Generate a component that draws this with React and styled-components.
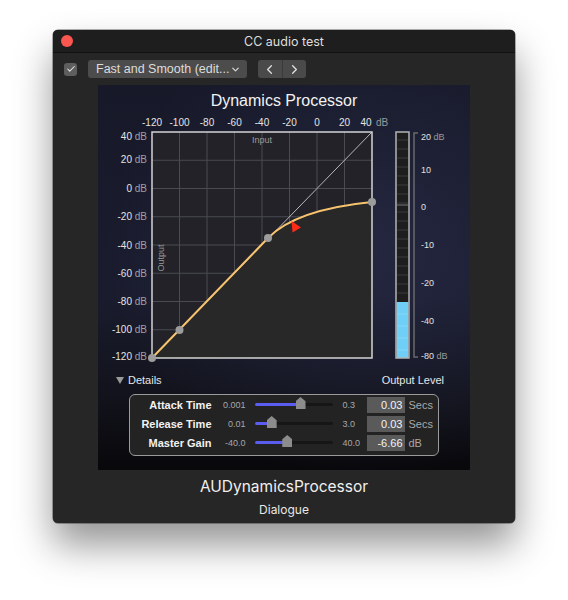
import styled, { createGlobalStyle } from "styled-components";
import { Check, ChevronDown, ChevronLeft, ChevronRight } from "lucide-react";

const GlobalStyle = createGlobalStyle`
  html, body {
    margin: 0;
    padding: 0;
    background: #ffffff;
  }
  body {
    font-family: "Liberation Sans", Arial, sans-serif;
  }
`;

const params = [
  { label: "Attack Time", min: "0.001", max: "0.3", value: "0.03", unit: "Secs", pos: 0.59 },
  { label: "Release Time", min: "0.01", max: "3.0", value: "0.03", unit: "Secs", pos: 0.22 },
  { label: "Master Gain", min: "-40.0", max: "40.0", value: "-6.66", unit: "dB", pos: 0.42 },
];

const xTicks = [
  ["-120", 152],
  ["-100", 179.5],
  ["-80", 207],
  ["-60", 234.5],
  ["-40", 262],
  ["-20", 289.5],
  ["0", 317],
  ["20", 344.5],
  ["40", 366],
];

const yTicks = [
  ["40", 136],
  ["20", 159.5],
  ["0", 188],
  ["-20", 216],
  ["-40", 245],
  ["-60", 273],
  ["-80", 301],
  ["-100", 329.5],
  ["-120", 356],
];

const meterTicks = [
  ["20", 136, true],
  ["10", 169],
  ["0", 206],
  ["-10", 244],
  ["-20", 282],
  ["-40", 320],
  ["-80", 355, true],
];

const Chart = () => {
  const vLines = [1, 2, 3, 4, 5, 6, 7].map((i) => 152 + i * 27.5);
  const hLines = [1, 2, 3, 4, 5, 6, 7].map((i) => 132 + i * 28.25);
  const curve = "M152 358 L268 238 Q295.6 209.6 372 202";
  const segs = [];
  for (let y = 140; y < 300; y += 9) segs.push(y);
  return (
    <ChartSvg width="372" height="258" viewBox="0 0 372 258">
      <g transform="translate(-98,-112)" fontFamily="Liberation Sans, Arial, sans-serif">
        {xTicks.map(([t, x]) => (
          <text key={t} x={x} y="126" fontSize="10" fill="#e4e4e4" textAnchor="middle">
            {t}
          </text>
        ))}
        <text x="376" y="126" fontSize="10" fill="#9a9a9a">dB</text>
        {yTicks.map(([t, y]) => (
          <text key={t} x="147" y={y + 3.5} fontSize="10" fill="#e4e4e4" textAnchor="end">
            {t} <tspan fill="#a0a0a0">dB</tspan>
          </text>
        ))}

        <rect x="152" y="132" width="220" height="226" fill="#222228" />
        {vLines.map((x) => (
          <line key={x} x1={x} y1="132" x2={x} y2="358" stroke="#4a4a52" strokeWidth="1" />
        ))}
        {hLines.map((y) => (
          <line key={y} x1="152" y1={y} x2="372" y2={y} stroke="#4a4a52" strokeWidth="1" />
        ))}
        <path d={curve + " L372 358 Z"} fill="#282828" />
        <text x="262" y="143" fontSize="9" fill="#9a9a9a" textAnchor="middle">Input</text>
        <text
          x="0"
          y="0"
          fontSize="9"
          fill="#9a9a9a"
          textAnchor="middle"
          transform="translate(164,258) rotate(-90)"
        >
          Output
        </text>
        <line x1="152" y1="358" x2="372" y2="132" stroke="#b8b8b8" strokeWidth="1" />
        <path d={curve} fill="none" stroke="#f7c36e" strokeWidth="2" />
        <rect x="152" y="132" width="220" height="226" fill="none" stroke="#d4d4d4" strokeWidth="1.5" />
        {[
          [152, 358],
          [179.5, 330],
          [268, 238],
          [372, 202],
        ].map(([cx, cy]) => (
          <circle key={cx} cx={cx} cy={cy} r="4" fill="#9c9c9c" />
        ))}
        <polygon points="291.5,221 301,227.5 292.5,232.5" fill="#ff2b17" />

        <rect x="396" y="132" width="13" height="226" fill="#1e1e1e" />
        {segs.map((y) => (
          <line key={y} x1="397" y1={y} x2="408" y2={y} stroke="#3a3a3a" strokeWidth="1" />
        ))}
        <line x1="397" y1="205" x2="408" y2="205" stroke="#777" strokeWidth="1" />
        <rect x="396.5" y="302" width="12" height="56" fill="#6fcff6" />
        {[314, 326, 338, 350].map((y) => (
          <line key={y} x1="397" y1={y} x2="408" y2={y} stroke="#86d8f8" strokeWidth="1" />
        ))}
        <rect x="396" y="132" width="13" height="226" fill="none" stroke="#b4b4b4" strokeWidth="1.5" />

        <path d="M418 133 L414 133 L414 357 L418 357" fill="none" stroke="#6a6a6a" strokeWidth="1.5" />
        {meterTicks.map(([t, y, unit]) => (
          <text key={t} x="421" y={y + 3.5} fontSize="9" fill="#e0e0e0">
            {t}
            {unit && <tspan fill="#9a9a9a"> dB</tspan>}
          </text>
        ))}
      </g>
    </ChartSvg>
  );
};

const App = () => (
  <>
    <GlobalStyle />
    <Page>
      <Window>
        <TitleBar>
          <CloseDot />
          <TitleText>CC audio test</TitleText>
        </TitleBar>
        <Toolbar>
          <CheckBox>
            <Check size={10} strokeWidth={2.5} color="#e8e8e8" />
          </CheckBox>
          <PopupButton>
            <span>Fast and Smooth (edit...</span>
            <ChevronDown size={11} strokeWidth={2.5} color="#dcdcdc" />
          </PopupButton>
          <Segmented>
            <Segment>
              <ChevronLeft size={15} strokeWidth={2} color="#e0e0e0" />
            </Segment>
            <Segment $divider>
              <ChevronRight size={15} strokeWidth={2} color="#e0e0e0" />
            </Segment>
          </Segmented>
        </Toolbar>

        <PluginPanel>
          <PanelTitle>Dynamics Processor</PanelTitle>
          <Chart />
          <DetailsRow>
            <Disclosure>
              <Triangle />
              Details
            </Disclosure>
            <OutputLabel>Output Level</OutputLabel>
          </DetailsRow>
          <ParamBox>
            {params.map((p) => (
              <ParamRow key={p.label}>
                <ParamLabel>{p.label}</ParamLabel>
                <RangeText $align="right">{p.min}</RangeText>
                <SliderTrack>
                  <SliderFill style={{ width: `${p.pos * 100}%` }} />
                  <Knob style={{ left: `calc(${p.pos * 100}% - 5px)` }} />
                </SliderTrack>
                <RangeText>{p.max}</RangeText>
                <ValueField>{p.value}</ValueField>
                <UnitText>{p.unit}</UnitText>
              </ParamRow>
            ))}
          </ParamBox>
        </PluginPanel>

        <Footer>
          <PluginName>AUDynamicsProcessor</PluginName>
          <PresetName>Dialogue</PresetName>
        </Footer>
      </Window>
    </Page>
  </>
);

const Page = styled.div`
  width: 568px;
  height: 600px;
  padding: 30px 0 0 53px;
  box-sizing: border-box;
  overflow: hidden;
`;

const Window = styled.div`
  width: 462px;
  height: 493px;
  background: #262626;
  border-radius: 5px;
  overflow: hidden;
  box-shadow: 0 22px 38px rgba(0, 0, 0, 0.42), 0 0 0 0.5px rgba(0, 0, 0, 0.6);
  display: flex;
  flex-direction: column;
`;

const TitleBar = styled.div`
  height: 22px;
  background: #1e1e1e;
  border-bottom: 1px solid #111;
  display: flex;
  align-items: center;
  justify-content: center;
  position: relative;
  flex-shrink: 0;
`;

const CloseDot = styled.span`
  position: absolute;
  left: 8px;
  top: 5px;
  width: 12px;
  height: 12px;
  border-radius: 50%;
  background: #fc5650;
`;

const TitleText = styled.div`
  font-family: Inter, "Liberation Sans", sans-serif;
  font-size: 12.5px;
  color: #dedede;
`;

const Toolbar = styled.div`
  height: 32px;
  display: flex;
  align-items: center;
  padding: 0 0 0 11px;
  flex-shrink: 0;
`;

const CheckBox = styled.div`
  width: 13px;
  height: 13px;
  border-radius: 3px;
  background: #5e5e5e;
  display: flex;
  align-items: center;
  justify-content: center;
  margin-right: 11px;
`;

const PopupButton = styled.div`
  width: 159px;
  height: 18px;
  box-sizing: border-box;
  border-radius: 3px;
  background: #4c4c4c;
  display: flex;
  align-items: center;
  justify-content: space-between;
  padding: 0 6px 0 8px;
  font-family: "Liberation Sans", Arial, sans-serif;
  font-size: 12.5px;
  color: #dcdcdc;
  white-space: nowrap;
  margin-right: 11px;
`;

const Segmented = styled.div`
  width: 48px;
  height: 18px;
  border-radius: 3px;
  background: #4a4a4a;
  display: flex;
  overflow: hidden;
`;

const Segment = styled.div`
  flex: 1;
  display: flex;
  align-items: center;
  justify-content: center;
  border-left: ${(p) => (p.$divider ? "1px solid #3a3a3a" : "none")};
`;

const PluginPanel = styled.div`
  margin-left: 45px;
  width: 372px;
  height: 385px;
  flex-shrink: 0;
  background:
    radial-gradient(ellipse 70% 60% at 72% 42%, rgba(44, 48, 78, 0.55) 0%, rgba(44, 48, 78, 0) 100%),
    linear-gradient(180deg, #171929 0%, #1a1c2e 55%, #101118 85%, #08080b 100%);
  display: flex;
  flex-direction: column;
  align-items: center;
`;

const PanelTitle = styled.div`
  font-size: 16px;
  color: #f2f2f2;
  height: 27px;
  line-height: 18px;
  padding-top: 7px;
  box-sizing: border-box;
`;

const ChartSvg = styled.svg`
  display: block;
  flex-shrink: 0;
`;

const DetailsRow = styled.div`
  width: 100%;
  box-sizing: border-box;
  display: flex;
  justify-content: space-between;
  align-items: center;
  padding: 0 26px 0 18px;
  height: 18px;
  margin-top: 1px;
`;

const Disclosure = styled.div`
  display: flex;
  align-items: center;
  gap: 4px;
  font-size: 11px;
  color: #e6e6e6;
`;

const Triangle = styled.span`
  width: 0;
  height: 0;
  border-left: 4px solid transparent;
  border-right: 4px solid transparent;
  border-top: 7px solid #9a9a9a;
`;

const OutputLabel = styled.div`
  font-size: 11px;
  color: #e6e6e6;
`;

const ParamBox = styled.div`
  margin-top: 5px;
  width: 310px;
  height: 62px;
  box-sizing: border-box;
  border: 1.5px solid #9a9a9a;
  border-radius: 6px;
  background: #232323;
  padding: 1.5px 0 0 0;
  display: flex;
  flex-direction: column;
  gap: 3px;
`;

const ParamRow = styled.div`
  display: grid;
  grid-template-columns: 81.5px 43px 78px 34px 38px auto;
  align-items: center;
  height: 16px;
`;

const ParamLabel = styled.div`
  font-size: 11px;
  font-weight: bold;
  color: #f2f2f2;
  text-align: right;
`;

const RangeText = styled.div`
  font-size: 9px;
  color: #a8a8a8;
  text-align: ${(p) => (p.$align === "right" ? "right" : "left")};
  padding: ${(p) => (p.$align === "right" ? "0 9px 0 0" : "0 0 0 10px")};
`;

const SliderTrack = styled.div`
  position: relative;
  height: 3px;
  border-radius: 2px;
  background: #161616;
`;

const SliderFill = styled.div`
  height: 100%;
  border-radius: 2px;
  background: #5b5cf0;
`;

const Knob = styled.div`
  position: absolute;
  top: -6px;
  width: 10px;
  height: 12px;
  background: #8c8c8c;
  clip-path: polygon(50% 0, 100% 35%, 100% 100%, 0 100%, 0 35%);
`;

const ValueField = styled.div`
  height: 16px;
  line-height: 16px;
  background: #5a5a5a;
  color: #f4f4f4;
  font-size: 11px;
  text-align: right;
  padding-right: 2px;
  box-sizing: border-box;
`;

const UnitText = styled.div`
  font-size: 11px;
  color: #a8a8a8;
  padding-left: 4px;
`;

const Footer = styled.div`
  flex: 1;
  display: flex;
  flex-direction: column;
  align-items: center;
  padding-top: 8px;
`;

const PluginName = styled.div`
  font-family: Inter, "Liberation Sans", sans-serif;
  font-size: 15.5px;
  color: #efefef;
  line-height: 18px;
`;

const PresetName = styled.div`
  font-family: Inter, "Liberation Sans", sans-serif;
  font-size: 12px;
  color: #e8e8e8;
  margin-top: 6px;
`;

export default App;
